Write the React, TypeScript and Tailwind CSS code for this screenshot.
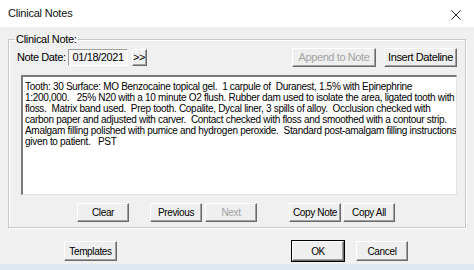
import React from 'react';

const noteLines = [
  'Tooth: 30 Surface: MO Benzocaine topical gel.  1 carpule of  Duranest, 1.5% with Epinephrine',
  '1:200,000.   25% N20 with a 10 minute O2 flush. Rubber dam used to isolate the area, ligated tooth with',
  'floss.  Matrix band used.  Prep tooth. Copalite, Dycal liner, 3 spills of alloy.  Occlusion checked with',
  'carbon paper and adjusted with carver.  Contact checked with floss and smoothed with a contour strip.',
  'Amalgam filling polished with pumice and hydrogen peroxide.  Standard post-amalgam filling instructions',
  'given to patient.   PST',
];

function WinButton({
  label,
  width,
  disabled,
  isDefault,
  className = '',
}: {
  label: string;
  width: string;
  disabled?: boolean;
  isDefault?: boolean;
  className?: string;
}) {
  return (
    <button
      className={`${width} ${className} flex items-center justify-center whitespace-nowrap bg-[#efefef] border-t border-l border-t-white border-l-white border-r border-b border-r-[#6a6a6a] border-b-[#6a6a6a] shadow-[inset_-1px_-1px_0_#a0a0a0] ${
        isDefault ? 'outline outline-1 outline-black' : ''
      } ${disabled ? 'text-[#a3a3a3]' : 'text-black'}`}
    >
      {label}
    </button>
  );
}

export default function App() {
  return (
    <div className="w-[474px] h-[270px] flex flex-col bg-white overflow-hidden text-[10px] tracking-[-0.35px] leading-[13px] font-['Liberation_Sans',Arial,sans-serif] text-black">
      {/* Title bar */}
      <div className="h-[27px] flex items-center justify-between pl-[8px] pr-[13px] bg-white">
        <span className="text-[11px] tracking-[-0.2px] text-[#111]">Clinical Notes</span>
        <svg width="10" height="10" viewBox="0 0 10 10" className="mt-[2px]">
          <path d="M0.5 0.5 L9.5 9.5 M9.5 0.5 L0.5 9.5" stroke="#222" strokeWidth="1" />
        </svg>
      </div>

      {/* Body */}
      <div className="flex-1 bg-[#f0f0f0] pl-[8px] pr-[8px] pt-[6px]">
        <fieldset className="min-w-0 border border-[#c8c8c8] shadow-[inset_1px_1px_0_#ffffff,1px_1px_0_#ffffff] pl-[6px] pr-[8px] pt-[2px] pb-[5px]">
          <legend className="px-[1px] leading-[13px] text-[11px] tracking-[-0.3px]">Clinical Note:</legend>

          {/* Date row */}
          <div className="flex items-center h-[19px] text-[11px] tracking-[-0.4px]">
            <span className="ml-[2px]">Note Date:</span>
            <div className="ml-[2px] w-[60px] h-[17px] flex items-center pl-[4px] bg-[#f6f6f6] border-t border-l border-t-[#a0a0a0] border-l-[#a0a0a0] border-r border-b border-r-white border-b-white">
              01/18/2021
            </div>
            <WinButton label=">>" width="w-[15px]" className="ml-[4px] h-[17px]" />
            <WinButton label="Append to Note" width="w-[84px]" disabled className="ml-auto h-[19px]" />
            <WinButton label="Insert Dateline" width="w-[73px]" className="ml-[8px] h-[19px]" />
          </div>

          {/* Note text */}
          <div className="mt-[8px] ml-[6px] h-[120px] overflow-hidden bg-white border-t-2 border-l-2 border-t-[#7a7a7a] border-l-[#7a7a7a] border-r border-b border-r-[#e3e3e3] border-b-[#e3e3e3] pl-[2px] pt-[4px] leading-[11px] tracking-[-0.3px]">
            {noteLines.map((line, i) => (
              <div key={i} className="whitespace-pre">
                {line}
              </div>
            ))}
          </div>

          {/* Navigation buttons */}
          <div className="mt-[8px] flex h-[19px]">
            <WinButton label="Clear" width="w-[52px]" className="ml-[62px]" />
            <WinButton label="Previous" width="w-[52px]" className="ml-[21px]" />
            <WinButton label="Next" width="w-[52px]" disabled className="ml-[3px]" />
            <WinButton label="Copy Note" width="w-[52px]" className="ml-[32px]" />
            <WinButton label="Copy All" width="w-[52px]" className="ml-[2px]" />
          </div>
        </fieldset>

        {/* Bottom row */}
        <div className="mt-[13px] flex h-[20px]">
          <WinButton label="Templates" width="w-[53px]" className="ml-[56px]" />
          <WinButton label="OK" width="w-[52px]" isDefault className="ml-[175px]" />
          <WinButton label="Cancel" width="w-[52px]" className="ml-[12px]" />
        </div>
      </div>

      {/* Window frame edge */}
      <div className="h-[6px] bg-[#dde8f3]" />
    </div>
  );
}
